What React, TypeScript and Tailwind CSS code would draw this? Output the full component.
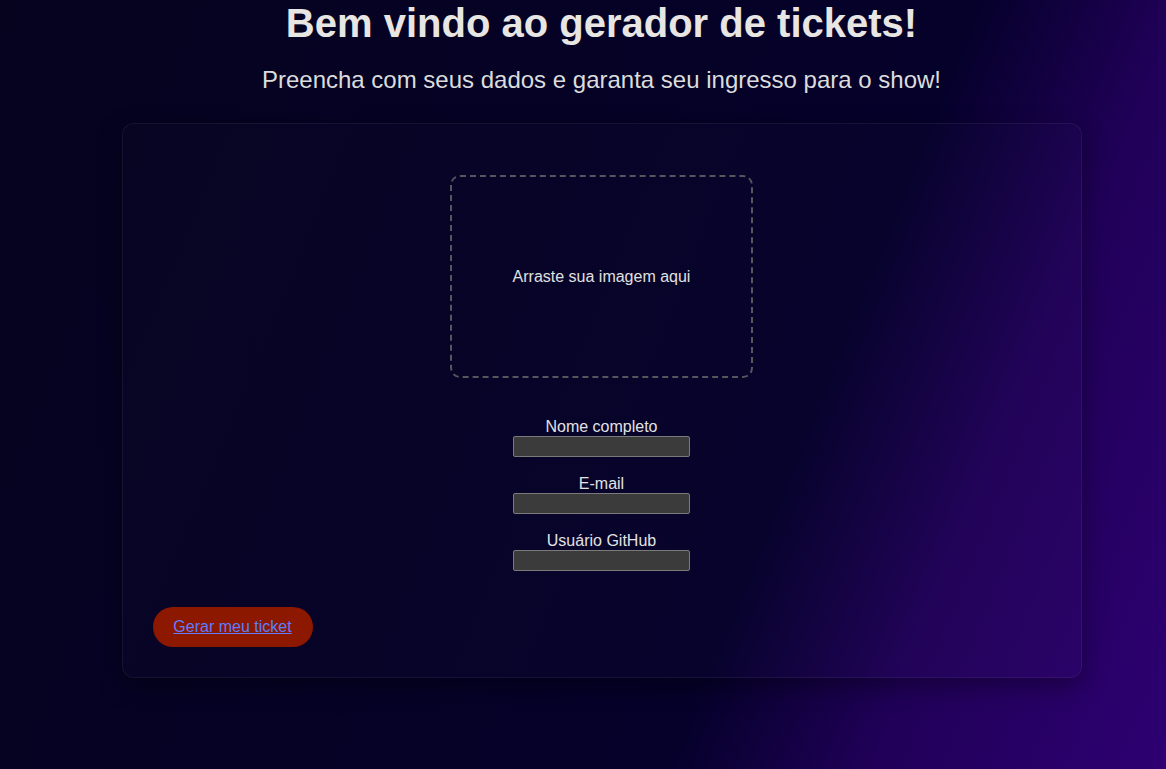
import React from "react";

const fields = ["Nome completo", "E-mail", "Usuário GitHub"];

const App: React.FC = () => {
  return (
    <div className="min-h-[769px] w-full bg-[linear-gradient(112deg,#06031f_0%,#05012a_66%,#200058_80%,#2e0072_100%)] font-['Liberation_Sans',Arial,sans-serif] text-[#e8e6e3]">
      <div className="flex flex-col items-center pl-[37px]">
        <h1 className="text-[40px] font-bold leading-[46px]">
          Bem vindo ao gerador de tickets!
        </h1>
        <p className="text-[24px] leading-[28px] mt-[20px] text-[#dcdcdc]">
          Preencha com seus dados e garanta seu ingresso para o show!
        </p>

        <div className="mt-[29px] w-[960px] h-[555px] rounded-[12px] border border-white/[0.06] bg-white/[0.01] shadow-[0_8px_24px_rgba(0,0,0,0.35)] p-[30px] flex flex-col">
          <div className="flex justify-center mt-[21px]">
            <div className="w-[303px] h-[203px] rounded-[10px] border-2 border-dashed border-[#56565f] flex items-center justify-center text-[16px] text-[#e0e0e0]">
              Arraste sua imagem aqui
            </div>
          </div>

          <div className="flex flex-col items-center gap-[18px] mt-[40px]">
            {fields.map((label) => (
              <div key={label} className="flex flex-col items-center">
                <label className="text-[16px] leading-[18px] text-[#e2e2e2]">{label}</label>
                <input
                  type="text"
                  className="w-[177px] h-[21px] bg-[#3b3b3b] border border-[#7a7a7a] rounded-[2px] outline-none"
                />
              </div>
            ))}
          </div>

          <div className="mt-[36px]">
            <button className="h-[40px] w-[160px] rounded-full bg-[#8c1800] text-[16px] text-[#5c7eff] underline">
              Gerar meu ticket
            </button>
          </div>
        </div>
      </div>
    </div>
  );
};

export default App;
